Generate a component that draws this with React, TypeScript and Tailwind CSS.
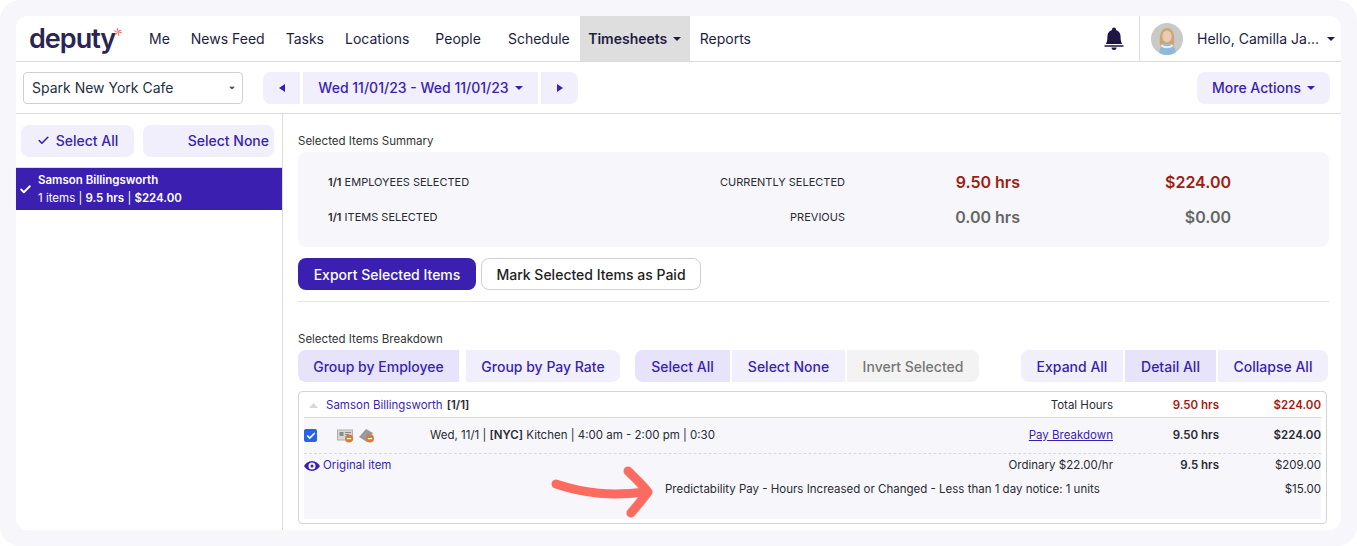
import React from 'react';
import { Check } from 'lucide-react';

const purple = 'text-[#3a1fb0]';

function Caret({ className = '' }: { className?: string }) {
  return (
    <svg width="8" height="4" viewBox="0 0 8 4" className={className}>
      <path d="M0 0h8L4 4z" fill="currentColor" />
    </svg>
  );
}

function Btn({ children, className = '' }: { children: React.ReactNode; className?: string }) {
  return (
    <button className={`h-8 flex items-center justify-center text-[14px] font-medium whitespace-nowrap ${className}`}>
      {children}
    </button>
  );
}

function Logo() {
  return (
    <div className="flex items-start w-[93px] shrink-0">
      <span className="text-[27px] leading-[32px] font-semibold tracking-[-1px] text-[#2b2456]">deputy</span>
      <svg width="16" height="16" viewBox="0 0 16 16" className="mt-[1px] -ml-[1px]">
        <g stroke="#f4755f" strokeWidth="2.2" strokeLinecap="round" fill="none">
          <path d="M8 6.5C7 5 6.5 3 7.5 1" />
          <path d="M9.5 7C10.5 5.5 12.5 4.5 14 4.5" />
          <path d="M9.5 8.5C11.5 8 13.5 8.5 15 9.5" />
          <path d="M8.5 10C9.5 11.5 10 13.5 9.5 15" />
          <path d="M6.5 9.5C5.5 11 4 12.5 2.5 13" />
          <path d="M6 8C4.5 8 2.5 7 1.5 5.5" />
        </g>
      </svg>
    </div>
  );
}

function Avatar() {
  return (
    <svg width="32" height="32" viewBox="0 0 32 32" className="rounded-full shrink-0">
      <rect width="32" height="32" fill="#c9c9c7" />
      <path d="M8 32c0-8 3-11 8-11s9 3 9 11z" fill="#8fb9dc" />
      <path d="M9 22C8 12 10 5 16 5s8 6 7 17c-2 1-3 0-3-1h-8c0 1-1 2-3 1z" fill="#c9a878" />
      <ellipse cx="16" cy="13.5" rx="4.6" ry="6" fill="#eccab0" />
      <path d="M11 21c1 3 9 3 10 0l1 2c-2 3-10 3-12 0z" fill="#eeeeee" />
    </svg>
  );
}

function FileIcon({ money = false }: { money?: boolean }) {
  return (
    <svg width="17" height="15" viewBox="0 0 17 15">
      {money ? (
        <path d="M1 9l7-8 7 4-6 9z" fill="#9a9a9a" />
      ) : (
        <>
          <rect x="0.5" y="2" width="15" height="10" fill="#d8d8d8" stroke="#b0b0b0" />
          <rect x="2.5" y="4" width="4" height="4" fill="#8a8a8a" />
          <rect x="8" y="4" width="6" height="1" fill="#8a8a8a" />
          <rect x="8" y="6" width="4" height="1" fill="#8a8a8a" />
        </>
      )}
      <circle cx="12" cy="10.5" r="4" fill="#dd7a2e" />
      <rect x="9.8" y="10" width="4.4" height="1.2" fill="#fff" />
    </svg>
  );
}

export default function App() {
  return (
    <div
      className="w-[1357px] h-[546px] overflow-hidden bg-white text-[#2a2a33]"
      style={{ fontFamily: 'Inter, "Liberation Sans", sans-serif' }}
    >
      <div className="h-full bg-[#f7f7fb] rounded-[20px] pt-4 px-4 pb-4">
        <div className="h-full bg-white rounded-t-[12px] rounded-b-[12px] flex flex-col overflow-hidden">
          {/* top nav */}
          <div className="h-[46px] shrink-0 flex items-center border-b border-[#dcdcdc] pl-[13px] text-[14px] text-[#221b45]">
            <Logo />
            <a className="ml-[27px]">Me</a>
            <a className="ml-[21px]">News Feed</a>
            <a className="ml-[21px]">Tasks</a>
            <a className="ml-[21px]">Locations</a>
            <a className="ml-[26px]">People</a>
            <a className="ml-[27px]">Schedule</a>
            <a className="ml-[10px] h-full w-[110px] bg-[#dedede] flex items-center justify-center gap-[6px] font-semibold">
              Timesheets <Caret />
            </a>
            <a className="ml-[10px]">Reports</a>
            <div className="ml-auto flex items-center h-full">
              <svg width="20" height="24" viewBox="0 0 20 24" className="text-[#1f1646] mr-[15px]">
                <path fill="currentColor" d="M10 0.5a2 2 0 0 1 2 2v.6c3 .8 4.6 3.4 4.6 6.6 0 3.4.6 6 1.6 7.3H1.8c1-1.3 1.6-3.9 1.6-7.3 0-3.2 1.6-5.8 4.6-6.6v-.6a2 2 0 0 1 2-2zM0.5 18.2h19v1.6h-19zM7.5 20.5h5a2.5 2.5 0 0 1-5 0z" />
              </svg>
              <div className="h-full border-l border-[#dcdcdc] pl-[11px] pr-[6px] flex items-center w-[202px]">
                <Avatar />
                <span className="ml-[14px] whitespace-nowrap">Hello, Camilla Ja...</span>
                <Caret className="ml-auto" />
              </div>
            </div>
          </div>

          {/* toolbar */}
          <div className="h-[52px] shrink-0 flex items-center border-b border-[#dcdcdc] pl-[7px] pr-[11px]">
            <div className="w-[220px] h-8 border border-[#cfcfcf] rounded-[4px] flex items-center justify-between pl-2 pr-[6px] text-[14px] text-[#1f2f45]">
              Spark New York Cafe
              <Caret className="text-[#444] scale-75" />
            </div>
            <Btn className={`ml-5 w-[37px] rounded-l-[8px] bg-[#f1effb] ${purple}`}>
              <svg width="6" height="8" viewBox="0 0 6 8"><path d="M6 0v8L0 4z" fill="currentColor" /></svg>
            </Btn>
            <Btn className={`ml-[3px] w-[235px] gap-[6px] bg-[#f1effb] ${purple}`}>
              Wed 11/01/23 - Wed 11/01/23 <Caret />
            </Btn>
            <Btn className={`ml-[3px] w-[37px] rounded-r-[8px] bg-[#f1effb] ${purple}`}>
              <svg width="6" height="8" viewBox="0 0 6 8"><path d="M0 0v8l6-4z" fill="currentColor" /></svg>
            </Btn>
            <Btn className={`ml-auto w-[133px] gap-[6px] rounded-[8px] bg-[#f1effb] ${purple}`}>
              More Actions <Caret />
            </Btn>
          </div>

          <div className="flex-1 flex min-h-0">
            {/* sidebar */}
            <div className="w-[267px] shrink-0 border-r border-[#dcdcdc]">
              <div className="h-[54px] flex items-center pl-[5px] gap-[9px] border-b border-[#dcdcdc]">
                <Btn className={`w-[113px] rounded-[8px] bg-[#f1effb] gap-[6px] ${purple}`}>
                  <Check size={13} strokeWidth={3} /> Select All
                </Btn>
                <Btn className={`w-[131px] rounded-[8px] bg-[#f1effb] justify-end pr-[5px] ${purple}`}>
                  Select None
                </Btn>
              </div>
              <div className="h-[42px] bg-[#3a1fb0] text-white flex items-center pl-[3px]">
                <Check size={13} strokeWidth={3.5} className="mr-[6px]" />
                <div className="text-[11.5px] leading-[18px]">
                  <div className="font-semibold">Samson Billingsworth</div>
                  <div>1 items | <b className="font-semibold">9.5 hrs</b> | <b className="font-semibold">$224.00</b></div>
                </div>
              </div>
            </div>

            {/* main */}
            <div className="flex-1 min-w-0 pl-[15px] pr-3 pt-[20px]">
              <div className="text-[11.5px] leading-[14px] text-[#333]">Selected Items Summary</div>
              <div className="mt-[4px] h-[95px] bg-[#f7f7fb] rounded-[8px] grid grid-cols-[355px_162px_175px_1fr] grid-rows-2 pl-[30px] pr-[98px] py-[13px] text-[11px] items-center">
                <div><b className="font-semibold">1/1</b> EMPLOYEES SELECTED</div>
                <div className="text-right">CURRENTLY SELECTED</div>
                <div className="text-right text-[16px] font-semibold text-[#a01c12]">9.50 hrs</div>
                <div className="text-right text-[16px] font-semibold text-[#a01c12]">$224.00</div>
                <div><b className="font-semibold">1/1</b> ITEMS SELECTED</div>
                <div className="text-right">PREVIOUS</div>
                <div className="text-right text-[16px] font-semibold text-[#666]">0.00 hrs</div>
                <div className="text-right text-[16px] font-semibold text-[#666]">$0.00</div>
              </div>

              <div className="mt-[11px] pb-[11px] flex gap-[5px] border-b border-[#e4e4e4]">
                <Btn className="w-[178px] rounded-[8px] bg-[#3a1fb0] text-white">Export Selected Items</Btn>
                <Btn className="w-[220px] rounded-[8px] bg-white border border-[#cfcfcf] text-[#222]">Mark Selected Items as Paid</Btn>
              </div>

              <div className="mt-[30px] text-[11.5px] leading-[14px] text-[#333]">Selected Items Breakdown</div>
              <div className="mt-[4px] flex">
                <Btn className={`w-[161px] rounded-l-[8px] bg-[#e6e3fa] ${purple}`}>Group by Employee</Btn>
                <Btn className={`ml-[7px] w-[154px] rounded-r-[8px] bg-[#f1effb] ${purple}`}>Group by Pay Rate</Btn>
                <Btn className={`ml-[15px] w-[95px] rounded-l-[8px] bg-[#e6e3fa] ${purple}`}>Select All</Btn>
                <Btn className={`ml-[2px] w-[113px] bg-[#f1effb] ${purple}`}>Select None</Btn>
                <Btn className="ml-[2px] w-[132px] rounded-r-[8px] bg-[#f3f3f3] text-[#777]">Invert Selected</Btn>
                <Btn className={`ml-[42px] w-[102px] rounded-l-[8px] bg-[#f1effb] ${purple}`}>Expand All</Btn>
                <Btn className={`ml-[2px] w-[91px] bg-[#e6e3fa] ${purple}`}>Detail All</Btn>
                <Btn className={`ml-[2px] w-[110px] rounded-r-[8px] bg-[#f1effb] ${purple}`}>Collapse All</Btn>
              </div>

              {/* breakdown table */}
              <div className="mt-[9px] w-[1029px] h-[133px] border border-[#d4d4d4] rounded-[4px] p-[5px] text-[11.5px] text-[#2a2a33]">
                <div className="h-[21px] flex items-center border-b border-[#d9d9d9] pb-[3px]">
                  <svg width="9" height="5" viewBox="0 0 9 5" className="ml-[5px] mr-[8px] text-[#d8d8d8]"><path d="M0 5h9L4.5 0z" fill="currentColor" /></svg>
                  <span className={purple}>Samson Billingsworth</span>
                  <b className="ml-1 font-semibold">[1/1]</b>
                  <span className="ml-auto w-[120px] text-right pr-[4px]">Total Hours</span>
                  <b className="w-[102px] text-right font-semibold text-[#a01c12]">9.50 hrs</b>
                  <b className="w-[102px] text-right font-semibold text-[#a01c12]">$224.00</b>
                </div>
                <div className="bg-[#f7f7fb] h-[101px]">
                  <div className="h-[36px] flex items-center border-b border-dashed border-[#d9d9d9]">
                    <span className="w-[13px] h-[13px] rounded-[2px] bg-[#2563eb] text-white flex items-center justify-center shrink-0">
                      <Check size={10} strokeWidth={4} />
                    </span>
                    <span className="ml-[20px] flex gap-[4px] w-[93px] shrink-0"><FileIcon /><FileIcon money /></span>
                    <span>Wed, 11/1 | <b className="font-semibold">[NYC]</b> Kitchen | 4:00 am - 2:00 pm | 0:30</span>
                    <a className="ml-auto underline text-[#3a1fb0] pr-[4px]">Pay Breakdown</a>
                    <b className="w-[102px] text-right font-semibold">9.50 hrs</b>
                    <b className="w-[102px] text-right font-semibold">$224.00</b>
                  </div>
                  <div className="h-[24px] flex items-center">
                    <svg width="16" height="10" viewBox="0 0 16 10" className="text-[#3a1fb0] mr-[3px]">
                      <path fill="currentColor" fillRule="evenodd" d="M8 0c3.5 0 6.3 2.2 8 5-1.7 2.8-4.5 5-8 5S1.7 7.8 0 5c1.7-2.8 4.5-5 8-5zm0 1.5a3.5 3.5 0 1 0 0 7 3.5 3.5 0 0 0 0-7zM8 3.5a1.5 1.5 0 1 1 0 3 1.5 1.5 0 0 1 0-3z" />
                    </svg>
                    <span className={purple}>Original item</span>
                    <span className="ml-auto pr-[4px]">Ordinary $22.00/hr</span>
                    <b className="w-[102px] text-right font-semibold">9.5 hrs</b>
                    <span className="w-[102px] text-right">$209.00</span>
                  </div>
                  <div className="h-[24px] flex items-center">
                    <span className="ml-[361px]">Predictability Pay - Hours Increased or Changed - Less than 1 day notice: 1 units</span>
                    <span className="ml-auto">$15.00</span>
                  </div>
                </div>
              </div>
            </div>
          </div>
        </div>
      </div>
      {/* annotation arrow */}
      <svg width="110" height="60" viewBox="0 0 110 60" className="absolute left-[548px] top-[465px]">
        <path d="M8 19c30 10 55 12 90 8" fill="none" stroke="#fd6b60" strokeWidth="9" strokeLinecap="round" />
        <path d="M80 6c8 8 15 14 20 21-6 8-12 15-17 21" fill="none" stroke="#fd6b60" strokeWidth="9" strokeLinecap="round" strokeLinejoin="round" />
      </svg>
    </div>
  );
}
